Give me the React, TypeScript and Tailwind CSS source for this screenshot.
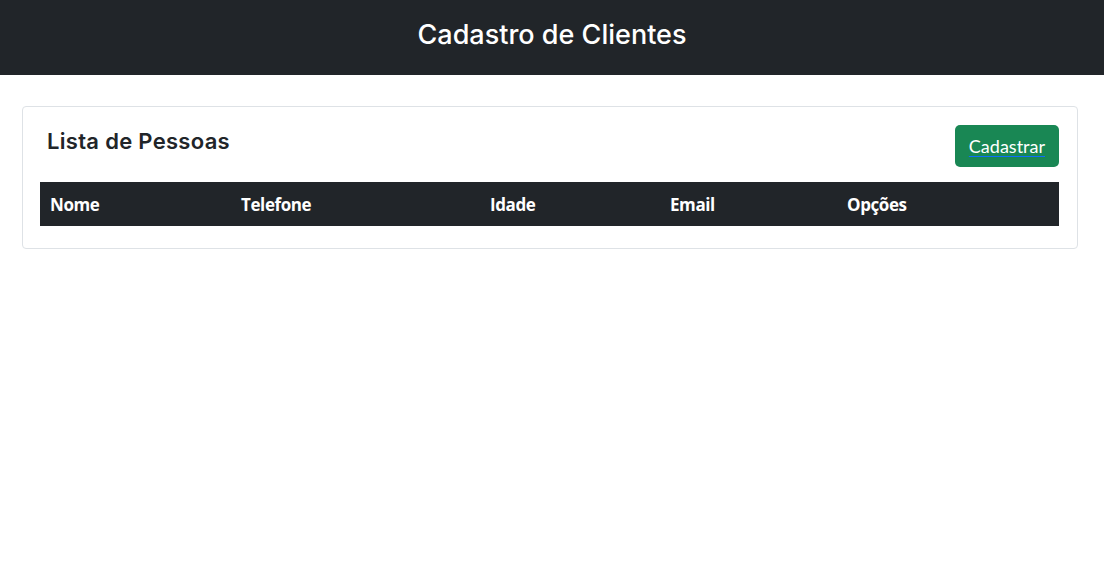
import React from 'react';

const columns = [
  { label: 'Nome', width: 'w-[191px]' },
  { label: 'Telefone', width: 'w-[249px]' },
  { label: 'Idade', width: 'w-[180px]' },
  { label: 'Email', width: 'w-[177px]' },
  { label: 'Opções', width: '' },
];

export default function App() {
  return (
    <div className="min-h-screen bg-white">
      {/* Header */}
      <header className="h-[75px] bg-[#212529] flex items-center justify-center pb-[5px]">
        <h1 className="text-white text-[27px] font-medium font-['Inter',sans-serif] tracking-[0px]">
          Cadastro de Clientes
        </h1>
      </header>

      {/* Card */}
      <div className="pl-[22px] pr-[26px] pt-[31px]">
        <div className="border border-[#dee2e6] rounded-[4px] pl-[17px] pr-[18px] pt-[18px] pb-[22px]">
          <div className="flex items-start justify-between">
            <h2 className="pl-[7px] text-[22px] font-semibold text-[#212529] font-['Inter',sans-serif] tracking-[0.3px]">
              Lista de Pessoas
            </h2>
            <button className="h-[42px] px-[14px] rounded-[5px] bg-[#198754] text-white text-[18px] font-['Lato',sans-serif] underline decoration-[#0d6efd] underline-offset-[3px]">
              Cadastrar
            </button>
          </div>

          <table className="mt-[15px] w-full border-collapse">
            <thead>
              <tr className="bg-[#212529] h-[44px]">
                {columns.map((c) => (
                  <th
                    key={c.label}
                    className={`${c.width} text-left px-[10px] pt-[2px] text-white text-[17px] font-bold font-['Open_Sans',sans-serif] tracking-[-0.4px]`}
                  >
                    {c.label}
                  </th>
                ))}
              </tr>
            </thead>
          </table>
        </div>
      </div>
    </div>
  );
}
